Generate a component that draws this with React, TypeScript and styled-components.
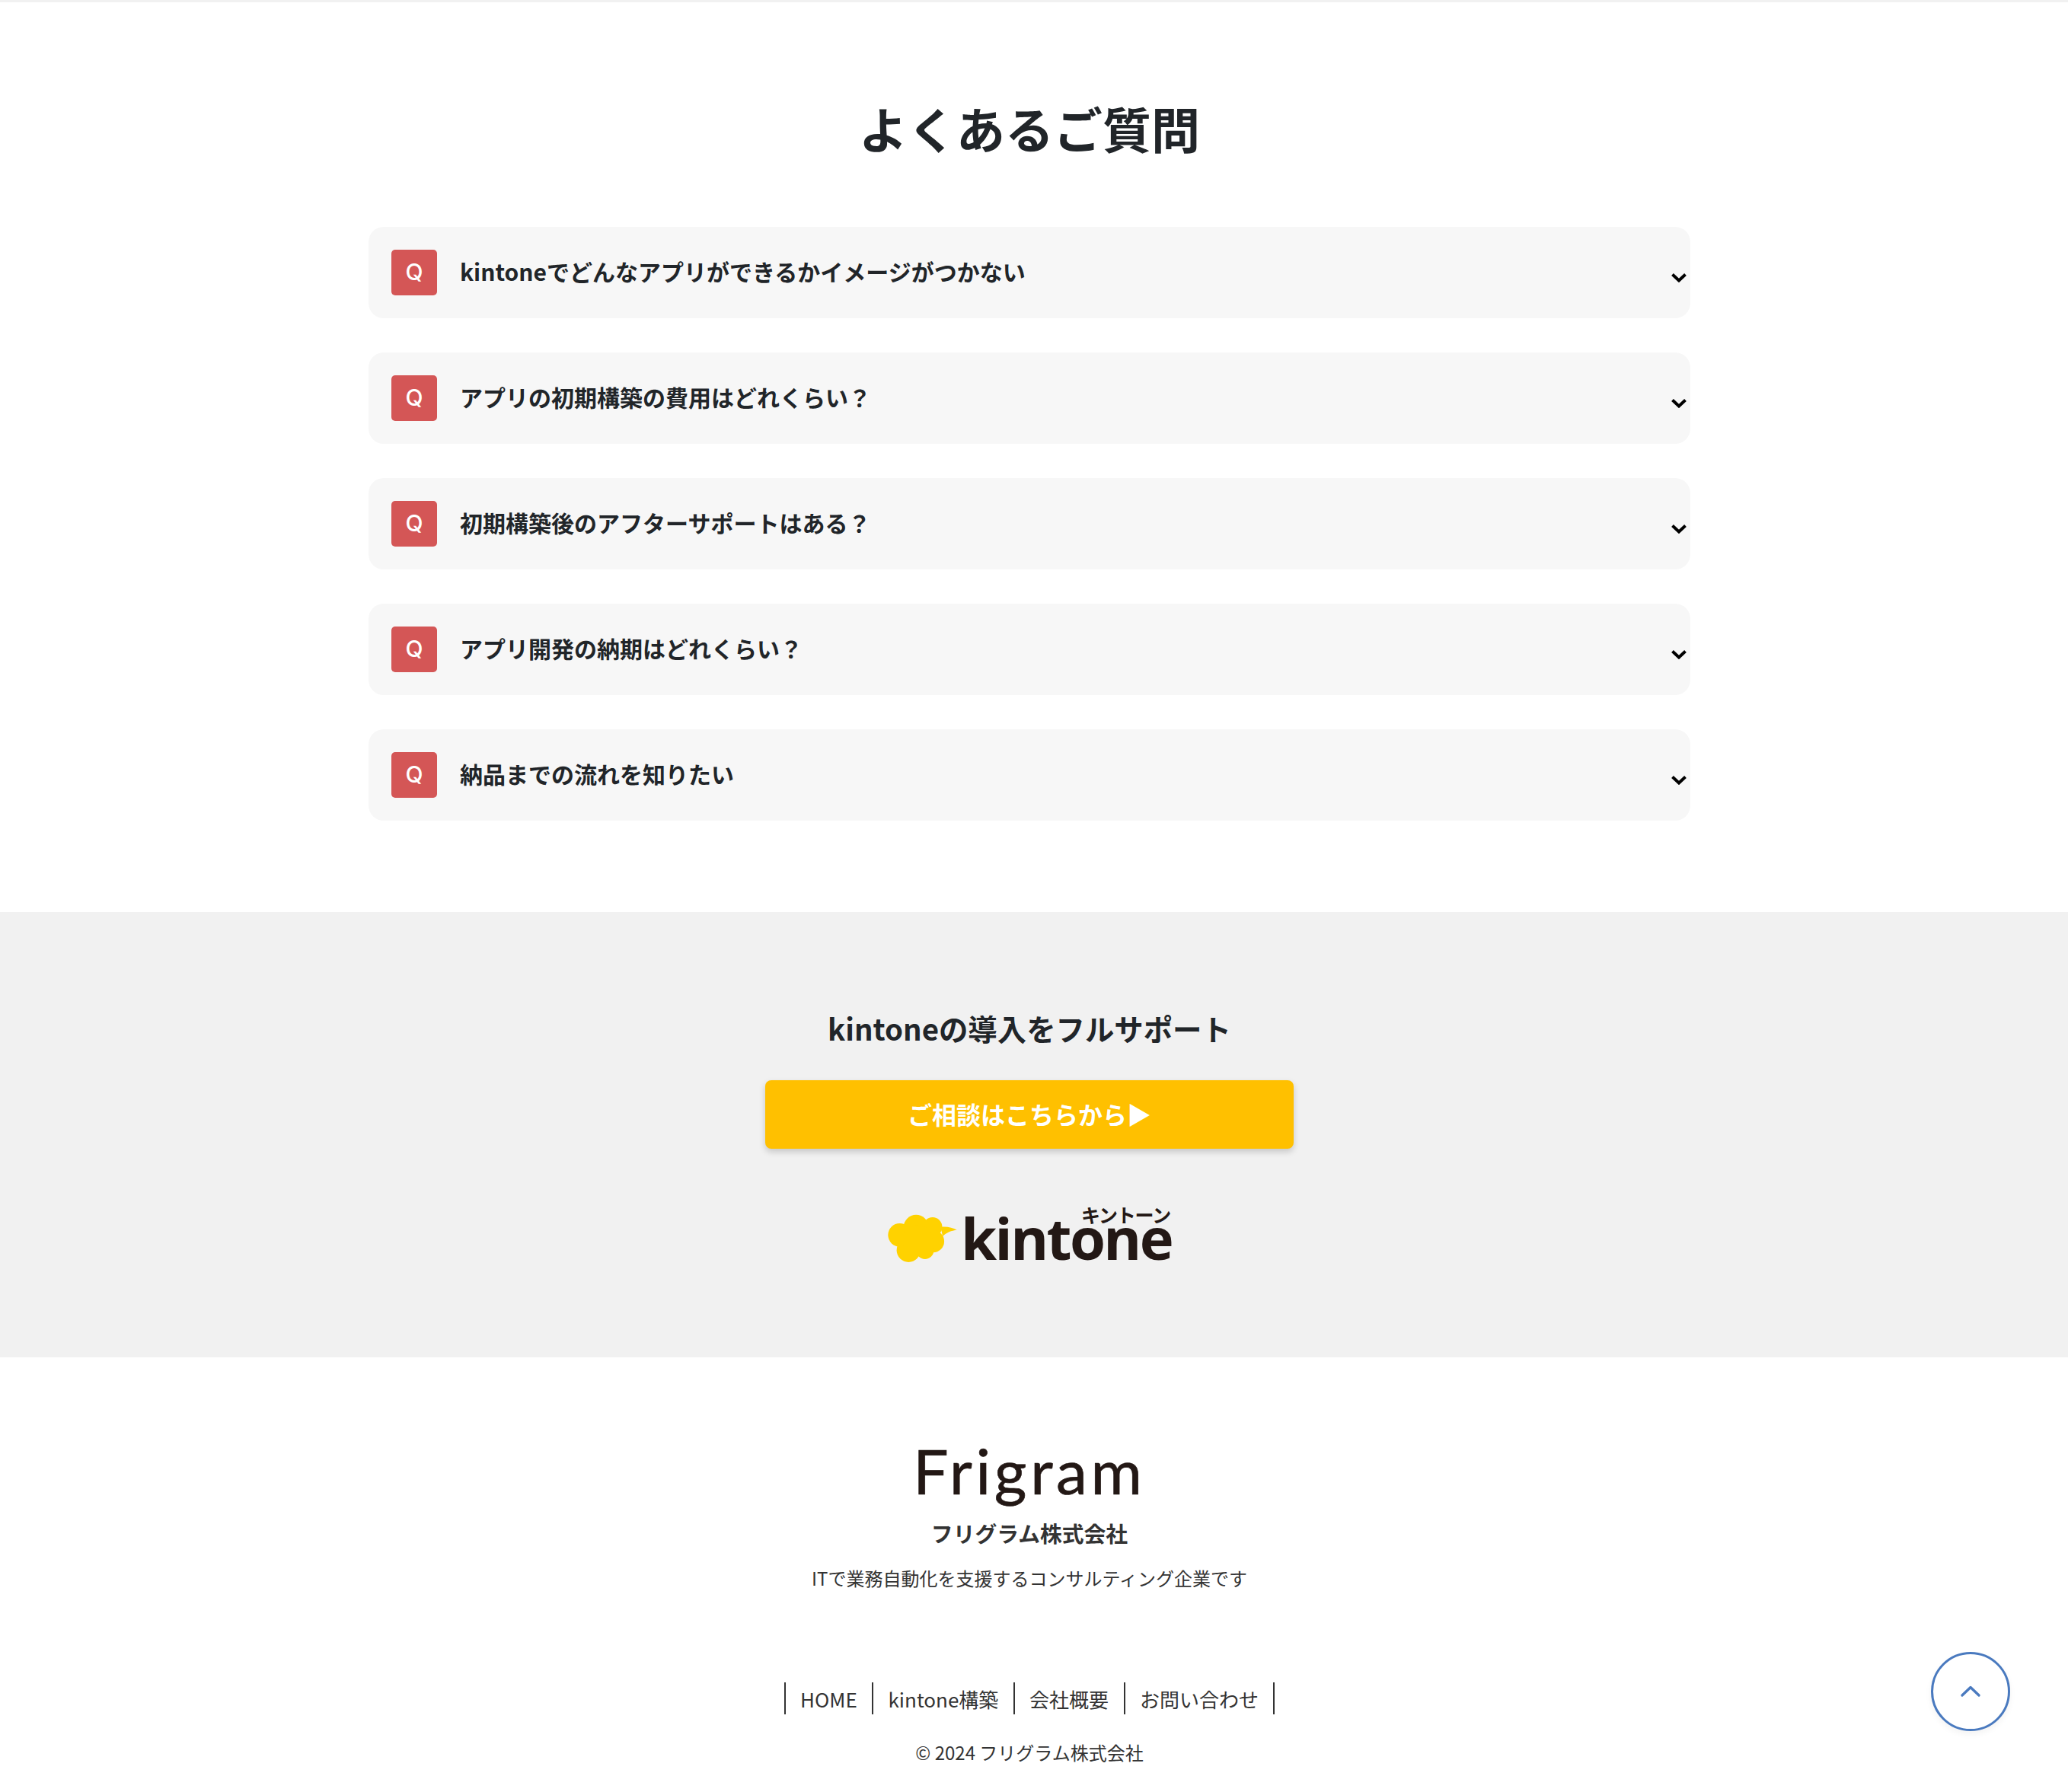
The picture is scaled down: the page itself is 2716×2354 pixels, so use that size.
import React from "react";
import styled, { createGlobalStyle } from "styled-components";

const jp = `"Noto Sans CJK JP", "Noto Sans", sans-serif`;

const Global = createGlobalStyle`
  html, body { margin: 0; padding: 0; background: #fff; }
  body { font-family: ${jp}; color: #212529; }
  * { box-sizing: border-box; }
`;

const Page = styled.div`
  border-top: 3px solid #f1f1f1;
  position: relative;
`;

const FaqSection = styled.section`
  padding: 0 12px 120px 0;
  display: flex;
  flex-direction: column;
  align-items: center;
`;

const Title = styled.h2`
  margin: 116px 0 0;
  height: 96px;
  font-size: 64px;
  line-height: 96px;
  font-weight: 700;
  color: #212529;
`;

const FaqList = styled.div`
  margin-top: 83px;
  width: 1736px;
  display: flex;
  flex-direction: column;
  gap: 45px;
`;

const FaqCard = styled.div`
  position: relative;
  height: 120px;
  padding: 30px;
  display: flex;
  align-items: center;
  gap: 30px;
  background: #f7f7f7;
  border-radius: 20px;
`;

const QBadge = styled.span`
  width: 60px;
  height: 60px;
  flex: none;
  display: flex;
  align-items: center;
  justify-content: center;
  padding-bottom: 2px;
  background: #d45656;
  color: #fff;
  border-radius: 5px;
  font-family: Inter, "Liberation Sans", sans-serif;
  font-size: 30px;
  font-weight: 500;
`;

const Question = styled.span`
  padding-bottom: 3px;
  font-size: 30px;
  line-height: 45px;
  font-weight: 700;
  color: #212529;
`;

const Chevron = styled.svg`
  position: absolute;
  right: 5px;
  top: 60px;
  width: 20px;
  height: 13px;
`;

const CtaSection = styled.section`
  background: #f1f1f1;
  height: 585px;
  padding: 125px 12px 0 0;
  display: flex;
  flex-direction: column;
  align-items: center;
`;

const CtaTitle = styled.h3`
  margin: 0;
  font-size: 38.4px;
  line-height: 54px;
  font-weight: 700;
  color: #212529;
`;

const CtaButton = styled.a`
  margin-top: 42px;
  width: 694px;
  height: 90px;
  padding-bottom: 2px;
  display: flex;
  align-items: center;
  justify-content: center;
  background: #ffc000;
  color: #fff;
  border-radius: 8px;
  font-size: 32px;
  font-weight: 700;
  box-shadow: 0 4px 8px rgba(0, 0, 0, 0.18);
`;

const KintoneLogo = styled.div`
  position: relative;
  margin-top: 75px;
  display: flex;
  align-items: center;
  gap: 4px;
  height: 84px;
`;

const Cloud = styled.svg`
  width: 93px;
  height: 65px;
  flex: none;
`;

const KintoneWord = styled.span`
  font-family: "Open Sans", sans-serif;
  font-size: 76px;
  line-height: 84px;
  font-weight: 700;
  letter-spacing: -2.6px;
  color: #231815;
`;

const KintoneKana = styled.span`
  position: absolute;
  right: 2px;
  top: -4px;
  font-size: 25px;
  line-height: 30px;
  font-weight: 700;
  letter-spacing: -1.2px;
  color: #231815;
`;

const Footer = styled.footer`
  padding: 100px 12px 0 0;
  display: flex;
  flex-direction: column;
  align-items: center;
  color: #333;
`;

const FrigramLogo = styled.div`
  font-family: Lato, sans-serif;
  font-size: 82px;
  line-height: 96px;
  font-weight: 400;
  letter-spacing: 4.7px;
  -webkit-text-stroke: 0.7px #231815;
  color: #231815;
`;

const Company = styled.div`
  margin-top: 14px;
  font-size: 28.8px;
  line-height: 42px;
  font-weight: 700;
  color: #333;
`;

const Tagline = styled.p`
  margin: 20px 0 0;
  font-size: 24px;
  line-height: 36px;
  color: #333;
`;

const Nav = styled.nav`
  margin-top: 119px;
  display: flex;
  border-left: 2px solid #333;
`;

const NavLink = styled.a`
  height: 42px;
  padding: 0 19.4px;
  display: flex;
  align-items: center;
  border-right: 2px solid #333;
  font-size: 26px;
  color: #333;
`;

const Copyright = styled.div`
  margin-top: 32px;
  font-size: 24px;
  line-height: 36px;
  color: #333;
`;

const ToTop = styled.a`
  position: absolute;
  left: 2536px;
  top: 2167px;
  width: 104px;
  height: 104px;
  display: flex;
  align-items: center;
  justify-content: center;
  background: #fff;
  border: 3px solid #4a7abf;
  border-radius: 50%;
  box-shadow: 0 4px 8px rgba(0, 0, 0, 0.05);
`;

const faqs = [
  "kintoneでどんなアプリができるかイメージがつかない",
  "アプリの初期構築の費用はどれくらい？",
  "初期構築後のアフターサポートはある？",
  "アプリ開発の納期はどれくらい？",
  "納品までの流れを知りたい",
];

export default function App() {
  return (
    <Page>
      <Global />
      <FaqSection>
        <Title>よくあるご質問</Title>
        <FaqList>
          {faqs.map((q) => (
            <FaqCard key={q}>
              <QBadge>Q</QBadge>
              <Question>{q}</Question>
              <Chevron viewBox="0 0 20 13" aria-hidden="true">
                <path d="M1.5 2.5 L10 10.5 L18.5 2.5" fill="none" stroke="#000" strokeWidth="4" />
              </Chevron>
            </FaqCard>
          ))}
        </FaqList>
      </FaqSection>
      <CtaSection>
        <CtaTitle>kintoneの導入をフルサポート</CtaTitle>
        <CtaButton>ご相談はこちらから▶</CtaButton>
        <KintoneLogo>
          <Cloud viewBox="50 105 280 195" aria-hidden="true">
            <g fill="#ffd200">
              <circle cx="100" cy="190" r="46" />
              <circle cx="165" cy="160" r="50" />
              <circle cx="230" cy="158" r="38" />
              <circle cx="232" cy="215" r="44" />
              <circle cx="135" cy="250" r="47" />
              <circle cx="200" cy="250" r="35" />
              <circle cx="170" cy="210" r="60" />
              <path d="M262 158 C285 155 310 160 326 170 C305 172 285 180 270 195 Z" />
            </g>
          </Cloud>
          <KintoneWord>kintone</KintoneWord>
          <KintoneKana>キントーン</KintoneKana>
        </KintoneLogo>
      </CtaSection>
      <Footer>
        <FrigramLogo>Frigram</FrigramLogo>
        <Company>フリグラム株式会社</Company>
        <Tagline>ITで業務自動化を支援するコンサルティング企業です</Tagline>
        <Nav>
          <NavLink>HOME</NavLink>
          <NavLink>kintone構築</NavLink>
          <NavLink>会社概要</NavLink>
          <NavLink>お問い合わせ</NavLink>
        </Nav>
        <Copyright>© 2024 フリグラム株式会社</Copyright>
      </Footer>
      <ToTop>
        <svg width="28" height="18" viewBox="0 0 28 18" aria-hidden="true">
          <path d="M3 14 L14 3.5 L25 14" fill="none" stroke="#4a7abf" strokeWidth="3.4" strokeLinecap="round" strokeLinejoin="round" />
        </svg>
      </ToTop>
    </Page>
  );
}
